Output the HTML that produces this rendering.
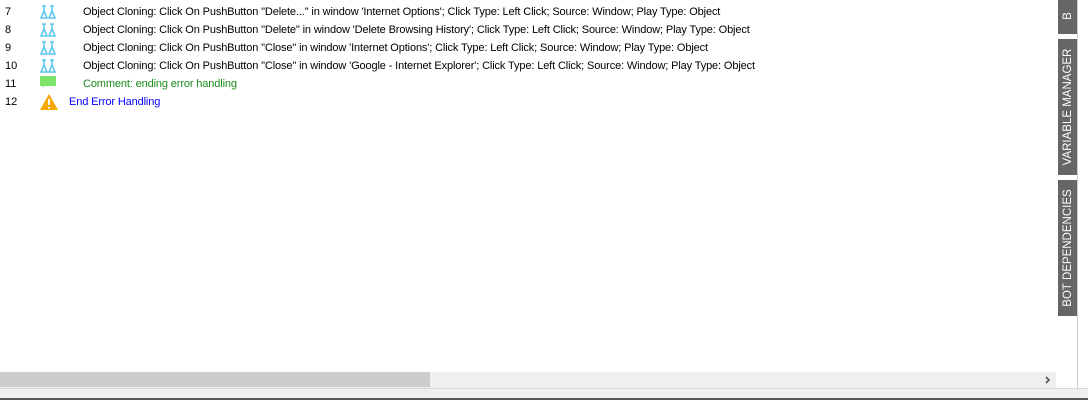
<!DOCTYPE html>
<html><head><style>
body{margin:0;width:1088px;height:400px;background:#fff;position:relative;overflow:hidden;font-family:"Liberation Sans",Arial,sans-serif;font-size:11px;}
.r{position:absolute;left:0;height:18px;line-height:18px;white-space:nowrap;}
.n{position:absolute;left:5px;color:#000;font-size:11px;}
.ic{position:absolute;left:40px;top:2px;}
.t{position:absolute;left:83px;color:#000;letter-spacing:-0.13px;}
.tab{position:absolute;left:1058px;width:19px;background:#666;color:#fff;font-size:11.5px;}
.tab span{position:absolute;left:50%;top:50%;transform:translate(-50%,-50%) rotate(-90deg);white-space:nowrap;}
</style></head><body>
<svg width="0" height="0" style="position:absolute"><defs>
<g id="fl"><path d="M2 1h4M4 1v5l-3 7h6l-3-7M10 1h4M12 1v5l-3 7h6l-3-7" fill="none" stroke="#5cc8f0" stroke-width="1.6"/></g>
</defs></svg>
<div class="r" style="top:3px"><span class="n">7</span><svg class="ic" width="16" height="14"><use href="#fl"/></svg><span class="t">Object Cloning: Click On PushButton "Delete..." in window 'Internet Options'; Click Type: Left Click; Source: Window; Play Type: Object</span></div>
<div class="r" style="top:21px"><span class="n">8</span><svg class="ic" width="16" height="14"><use href="#fl"/></svg><span class="t">Object Cloning: Click On PushButton "Delete" in window 'Delete Browsing History'; Click Type: Left Click; Source: Window; Play Type: Object</span></div>
<div class="r" style="top:39px"><span class="n">9</span><svg class="ic" width="16" height="14"><use href="#fl"/></svg><span class="t">Object Cloning: Click On PushButton "Close" in window 'Internet Options'; Click Type: Left Click; Source: Window; Play Type: Object</span></div>
<div class="r" style="top:57px"><span class="n">10</span><svg class="ic" width="16" height="14"><use href="#fl"/></svg><span class="t">Object Cloning: Click On PushButton "Close" in window 'Google - Internet Explorer'; Click Type: Left Click; Source: Window; Play Type: Object</span></div>
<div class="r" style="top:75px"><span class="n">11</span><svg class="ic" width="16" height="14" style="top:1px"><path d="M0 0h16v10H4l-1 3v-3H0z" fill="#7de36a"/></svg><span class="t" style="color:#1a8a1a">Comment: ending error handling</span></div>
<div class="r" style="top:93px"><span class="n">12</span><svg class="ic" width="18" height="16" style="top:1px"><path d="M9 0L18 16H0z" fill="#f5a800"/><path d="M9 5v6M9 13v1.5" stroke="#fff" stroke-width="2"/></svg><span class="t" style="left:69px;color:#0000ff">End Error Handling</span></div>
<div class="tab" style="top:-2px;height:36px"><span>B</span></div>
<div class="tab" style="top:39px;height:136px"><span>VARIABLE MANAGER</span></div>
<div class="tab" style="top:180px;height:136px"><span>BOT DEPENDENCIES</span></div>
<div style="position:absolute;left:1077px;top:0;width:1px;height:388px;background:#ccc"></div>
<div style="position:absolute;left:0;top:372px;width:1056px;height:16px;background:#efefef"></div>
<div style="position:absolute;left:0;top:372px;width:430px;height:15px;background:#cdcdcd"></div>
<svg style="position:absolute;left:1044px;top:376px" width="8" height="8"><path d="M2 1l3 3-3 3" fill="none" stroke="#555" stroke-width="1.6"/></svg>
<div style="position:absolute;left:0;top:388px;width:1088px;height:1px;background:#d6d6d6"></div>
<div style="position:absolute;left:0;top:389px;width:1088px;height:9px;background:#efefef"></div>
<div style="position:absolute;left:0;top:398px;width:1088px;height:2px;background:#555"></div>
</body></html>
